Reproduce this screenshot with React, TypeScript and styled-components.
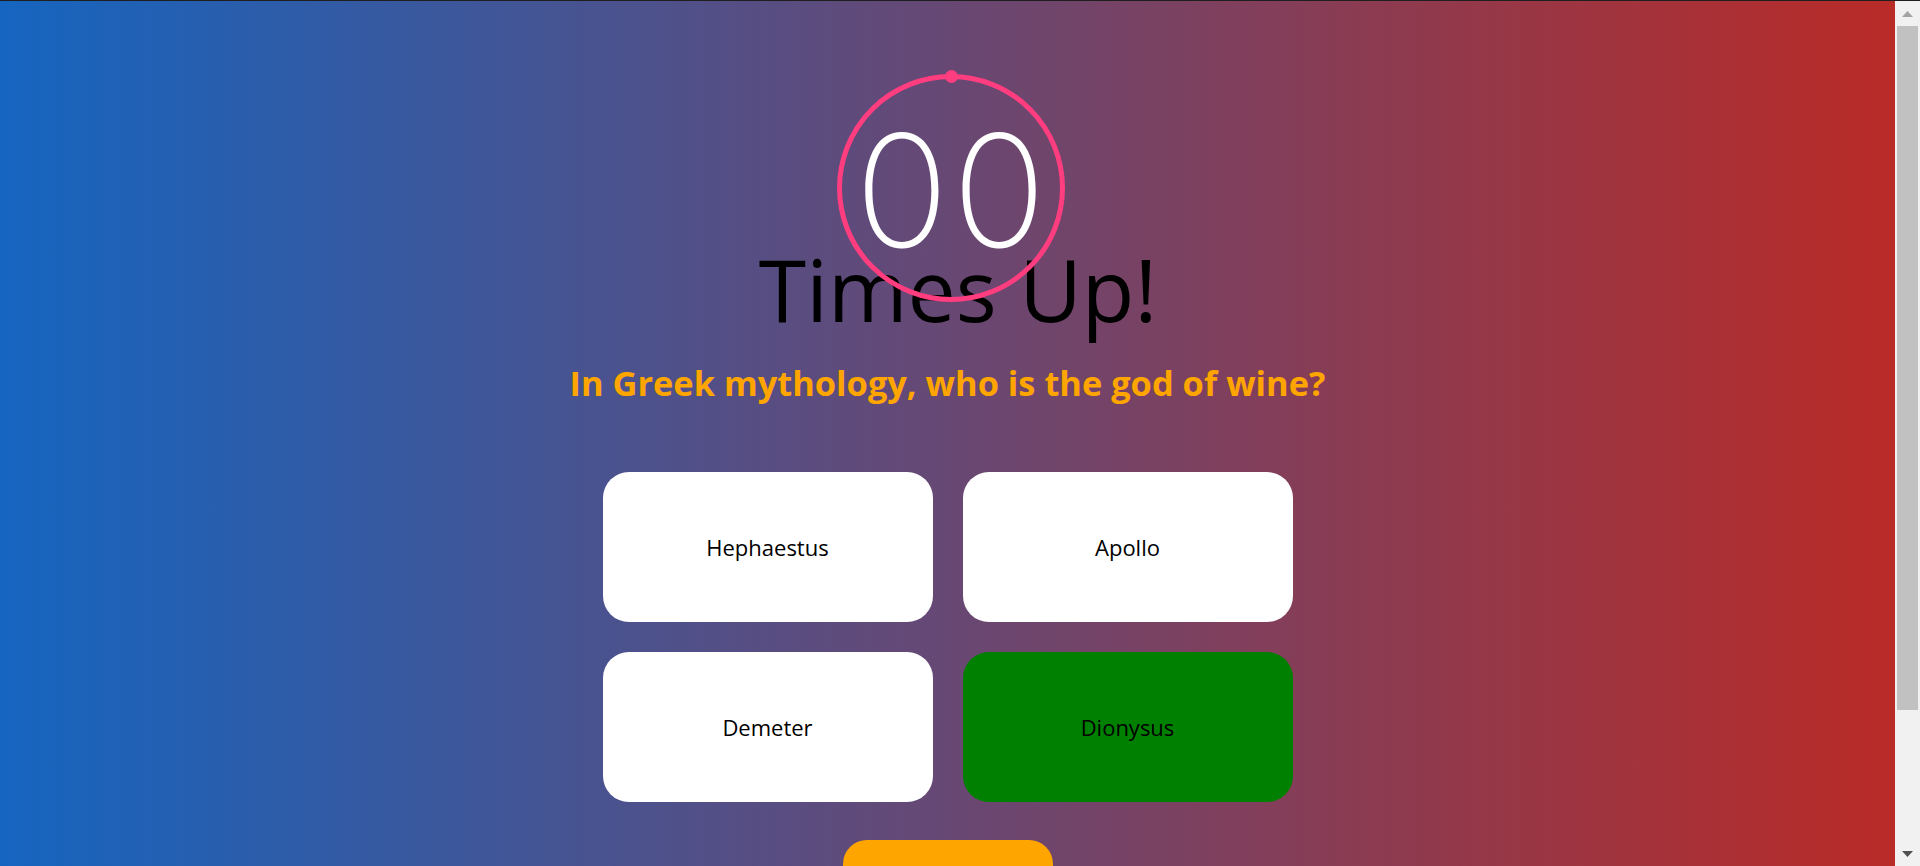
import React from "react";
import styled, { createGlobalStyle } from "styled-components";

const GlobalStyle = createGlobalStyle`
  html, body {
    margin: 0;
    padding: 0;
  }
  body {
    background: #f1f1f1;
    font-family: "Open Sans", "Noto Sans", sans-serif;
  }
`;

const Shell = styled.div`
  display: flex;
  align-items: flex-start;
  border-top: 1px solid #1e1e1e;
`;

const Page = styled.main`
  flex: 1;
  min-width: 0;
  display: flex;
  flex-direction: column;
  align-items: center;
  background: linear-gradient(to right, #1565c0, #b92b27);
  padding: 73px 0 134px;
  box-sizing: border-box;
`;

const Scrollbar = styled.aside`
  position: sticky;
  top: 0;
  width: 25px;
  height: 865px;
  flex: none;
  background: #f1f1f1;
  display: flex;
  flex-direction: column;
  align-items: center;
`;

const ScrollArrow = styled.div`
  height: 25px;
  width: 100%;
  display: flex;
  align-items: center;
  justify-content: center;
`;

const ScrollTrack = styled.div`
  flex: 1;
  width: 100%;
  display: flex;
  flex-direction: column;
  align-items: center;
`;

const ScrollThumb = styled.div`
  width: 21px;
  height: 684px;
  background: #c1c1c1;
`;

const TimerRing = styled.div`
  position: relative;
  width: 228px;
  height: 228px;
  margin-left: 7px;
  box-sizing: border-box;
  border: 5px solid #ff3d7f;
  border-radius: 50%;
  display: flex;
  align-items: center;
  justify-content: center;
`;

const TimerDot = styled.span`
  position: absolute;
  top: -9px;
  left: 50%;
  width: 13px;
  height: 13px;
  margin-left: -6.5px;
  border-radius: 50%;
  background: #ff3d7f;
`;

const Digits = styled.span`
  font-family: Inter, Roboto, sans-serif;
  font-weight: 200;
  font-size: 156px;
  line-height: 1;
  color: #ffffff;
  letter-spacing: 3px;
  margin: 6px 0 0 2px;
`;

const Title = styled.h1`
  margin: -56px 0 0 21px;
  font-family: "Open Sans", sans-serif;
  font-weight: 400;
  font-size: 86px;
  line-height: 1;
  color: #000000;
`;

const Question = styled.h2`
  margin: 30px 0 0;
  font-family: "Open Sans", sans-serif;
  font-weight: 700;
  font-size: 34.4px;
  line-height: 42px;
  color: #ffa500;
`;

const Answers = styled.div`
  margin-top: 68px;
  display: grid;
  grid-template-columns: repeat(2, 330px);
  grid-auto-rows: 150px;
  gap: 30px;
`;

const Answer = styled.button<{ $correct?: boolean }>`
  border: none;
  border-radius: 26px;
  background: ${(p) => (p.$correct ? "#008000" : "#ffffff")};
  color: #000000;
  font-family: "Open Sans", sans-serif;
  font-size: 22px;
  display: flex;
  align-items: center;
  justify-content: center;
  cursor: pointer;
`;

const NextButton = styled.button`
  margin-top: 38px;
  width: 210px;
  height: 80px;
  border: none;
  border-radius: 24px;
  background: #ffa500;
  color: #000000;
  font-family: "Open Sans", sans-serif;
  font-size: 22px;
  cursor: pointer;
`;

const answers = [
  { label: "Hephaestus", correct: false },
  { label: "Apollo", correct: false },
  { label: "Demeter", correct: false },
  { label: "Dionysus", correct: true },
];

export default function App() {
  return (
    <>
      <GlobalStyle />
      <Shell>
        <Page>
          <TimerRing>
            <TimerDot />
            <Digits>00</Digits>
          </TimerRing>
          <Title>Times Up!</Title>
          <Question>In Greek mythology, who is the god of wine?</Question>
          <Answers>
            {answers.map((a) => (
              <Answer key={a.label} $correct={a.correct}>
                {a.label}
              </Answer>
            ))}
          </Answers>
          <NextButton>Next</NextButton>
        </Page>
        <Scrollbar aria-hidden="true">
          <ScrollArrow>
            <svg width="11" height="6" viewBox="0 0 11 6">
              <polygon points="0,6 11,6 5.5,0" fill="#a3a3a3" />
            </svg>
          </ScrollArrow>
          <ScrollTrack>
            <ScrollThumb />
          </ScrollTrack>
          <ScrollArrow>
            <svg width="11" height="6" viewBox="0 0 11 6">
              <polygon points="0,0 11,0 5.5,6" fill="#505050" />
            </svg>
          </ScrollArrow>
        </Scrollbar>
      </Shell>
    </>
  );
}
